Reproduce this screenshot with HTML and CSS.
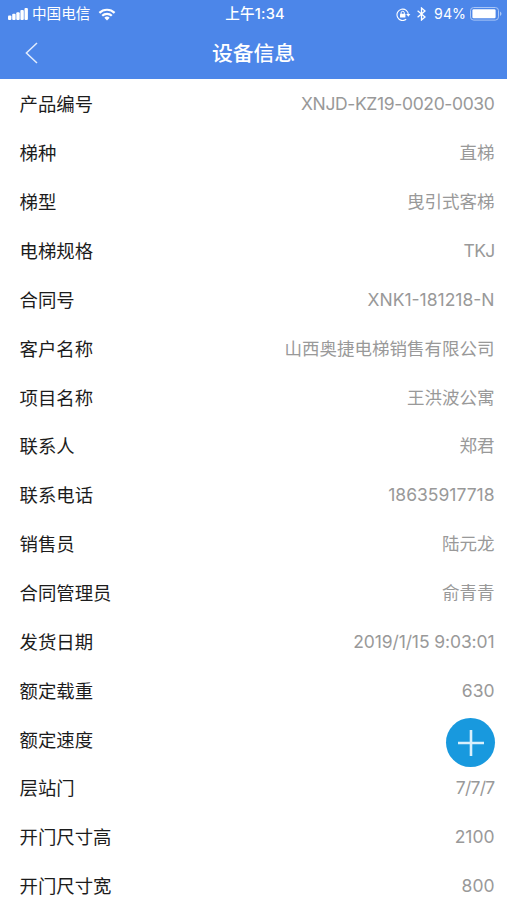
FILE: index.html
```
<!DOCTYPE html>
<html lang="zh-CN">
  <head>
    <meta charset="utf-8">
    <title>设备信息</title>
    <link rel="stylesheet" href="styles.css">
  </head>
  <body>
    <div class="header">
      <div class="status-bar">
        <div class="status-left">
          <svg class="signal" width="20" height="12" viewBox="0 0 20 12" fill="#fff">
            <rect x="0" y="7.5" width="3.4" height="4.5" rx="1"/>
            <rect x="4.2" y="5.8" width="3.4" height="6.2" rx="1"/>
            <rect x="8.3" y="4.3" width="3.4" height="7.7" rx="1"/>
            <rect x="12.4" y="2" width="3.4" height="10" rx="1"/>
            <rect x="16.5" y="0" width="3.4" height="12" rx="1"/>
          </svg>
          <span class="carrier">中国电信</span>
          <svg class="wifi" width="18" height="13" viewBox="0 0 18 13">
            <path d="M1.4 4.9a10.8 10.8 0 0 1 15.2 0M4.2 7.8a6.8 6.8 0 0 1 9.6 0" fill="none" stroke="#fff" stroke-width="2.2"/>
            <path d="M9 12.4L6.3 9.8a3.8 3.8 0 0 1 5.4 0z" fill="#fff"/>
          </svg>
        </div>
        <span class="time">上午1:34</span>
        <div class="status-right">
          <svg class="lock" width="15" height="13" viewBox="0 0 15 13" fill="none" stroke="#fff">
            <path d="M10.2 11.3A5.7 5.7 0 1 1 12.4 6.8" stroke-width="1.1"/>
            <path d="M10.2 6.1h4.2l-2.1 2.7z" fill="#fff" stroke="none"/>
            <rect x="4" y="5.8" width="5.4" height="3.8" rx=".5" fill="#fff" stroke="none"/>
            <path d="M5.1 6V4.9a1.6 1.6 0 0 1 3.2 0V6" stroke-width="1"/>
          </svg>
          <svg class="bluetooth" width="9" height="14" viewBox="0 0 9 14" fill="none" stroke="#fff" stroke-width="1.3">
            <path d="M.6 3.8L8 10 4.5 13V1L8 4 .6 10.2"/>
          </svg>
          <span class="percent">94%</span>
          <svg class="battery" width="32" height="14" viewBox="0 0 32 14">
            <rect x=".5" y=".5" width="28" height="12.6" rx="3.2" fill="none" stroke="#a9c6f6"/>
            <rect x="2.4" y="2.3" width="23.2" height="9" rx="1.3" fill="#fff"/>
            <path d="M30 4.6q1.5.7 1.5 2.2T30 9z" fill="#a9c6f6"/>
          </svg>
        </div>
      </div>
      <div class="nav-bar">
        <svg class="back" width="13" height="22" viewBox="0 0 13 22" fill="none" stroke="#e2ecfd" stroke-width="1.5">
          <path d="M12 1L1.4 11 12 21"/>
        </svg>
        <h1 class="title">设备信息</h1>
      </div>
    </div>

    <div class="list">
      <div class="row"><span class="label">产品编号</span><span class="value serial">XNJD-KZ19-0020-0030</span></div>
      <div class="row"><span class="label">梯种</span><span class="value">直梯</span></div>
      <div class="row"><span class="label">梯型</span><span class="value">曳引式客梯</span></div>
      <div class="row"><span class="label">电梯规格</span><span class="value tight">TKJ</span></div>
      <div class="row"><span class="label">合同号</span><span class="value">XNK1-181218-N</span></div>
      <div class="row"><span class="label">客户名称</span><span class="value">山西奥捷电梯销售有限公司</span></div>
      <div class="row"><span class="label">项目名称</span><span class="value">王洪波公寓</span></div>
      <div class="row"><span class="label">联系人</span><span class="value">郑君</span></div>
      <div class="row"><span class="label">联系电话</span><span class="value">18635917718</span></div>
      <div class="row"><span class="label">销售员</span><span class="value">陆元龙</span></div>
      <div class="row"><span class="label">合同管理员</span><span class="value">俞青青</span></div>
      <div class="row"><span class="label">发货日期</span><span class="value date">2019/1/15 9:03:01</span></div>
      <div class="row"><span class="label">额定载重</span><span class="value">630</span></div>
      <div class="row"><span class="label">额定速度</span></div>
      <div class="row"><span class="label">层站门</span><span class="value tight">7/7/7</span></div>
      <div class="row"><span class="label">开门尺寸高</span><span class="value">2100</span></div>
      <div class="row"><span class="label">开门尺寸宽</span><span class="value">800</span></div>
    </div>

    <!-- floating add button -->
    <div class="add-button">
      <svg width="26" height="26" viewBox="0 0 26 26" stroke="#d9f0fc" stroke-width="2.6">
        <path d="M13 0v26M0 13h26"/>
      </svg>
    </div>
  </body>
</html>
```

FILE: styles.css
```
body {
  margin: 0;
  height: 900px;
  overflow: hidden;
  background-color: #fff;
  font-family: Inter, "Noto Sans CJK SC", sans-serif;
}

.header {
  height: 79px;
  background-color: #4c86e9;
  color: #fff;
}

.status-bar {
  display: grid;
  grid-template-columns: 1fr auto 1fr;
  align-items: center;
  height: 27px;
  padding: 0 5px 0 8px;
  font-size: 14.6px;
  line-height: 28px;
}

.status-left,
.status-right {
  display: flex;
  align-items: center;
}

.status-right {
  justify-content: flex-end;
}

.carrier {
  margin: 0 8px 0 4px;
}

.time {
  font-size: 14.6px;
  font-weight: 500;
  letter-spacing: 0.2px;
}

.lock {
  margin-right: 6px;
}

.bluetooth {
  margin-right: 8px;
}

.percent {
  margin-right: 4px;
  font-size: 14.2px;
}

.nav-bar {
  display: grid;
  grid-template-columns: 1fr auto 1fr;
  align-items: center;
  height: 50px;
  padding: 0 25px;
}

.title {
  margin: 0;
  font-size: 20.8px;
  font-weight: 500;
  line-height: 50px;
  padding-top: 2px;
}

.list {
  padding-top: 1px;
}

.row {
  display: flex;
  align-items: center;
  justify-content: space-between;
  height: 48.87px;
  padding: 0 12.5px 0 19.5px;
  line-height: 48px;
}

.label {
  color: #1c1c1c;
  font-size: 18.4px;
}

.value {
  color: #999;
  font-size: 17.5px;
}

.serial {
  letter-spacing: -0.36px;
}

.date {
  letter-spacing: -0.1px;
}

.tight {
  letter-spacing: -0.7px;
}

.add-button {
  position: absolute;
  top: 718px;
  left: 446px;
  display: flex;
  align-items: center;
  justify-content: center;
  width: 49px;
  height: 49px;
  border-radius: 50%;
  background-color: #1899de;
}
```
